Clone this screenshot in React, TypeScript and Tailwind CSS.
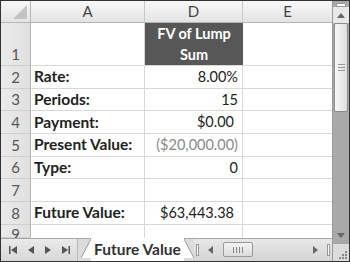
const rows = [
  { n: "2", label: "Rate:", value: "8.00%" },
  { n: "3", label: "Periods:", value: "15" },
  { n: "4", label: "Payment:", value: "$0.00", pad: true },
  { n: "5", label: "Present Value:", value: "($20,000.00)", muted: true },
  { n: "6", label: "Type:", value: "0" },
  { n: "7", label: "", value: "" },
  { n: "8", label: "Future Value:", value: "$63,443.38", pad: true },
];

function RowNum({ n, className = "" }: { n: string; className?: string }) {
  return (
    <div
      className={`w-[30px] shrink-0 flex justify-center bg-gradient-to-r from-[#ebebeb] to-[#e0e0e0] border-r border-[#b4b4b4] border-b border-b-[#cfcfcf] text-[#555] text-[15px] ${className}`}
    >
      {n}
    </div>
  );
}

export default function App() {
  return (
    <div className="w-[350px] h-[262px] overflow-hidden bg-white border border-[#333] flex font-['Lato',sans-serif] text-[#222]">
      {/* ---------- GRID ---------- */}
      <div className="w-[331px] flex flex-col">
        {/* column headers */}
        <div className="h-[22px] flex bg-gradient-to-b from-[#f8f8f8] to-[#e4e4e4] border-b border-[#b4b4b4] text-[15px] text-[#444]">
          <div className="w-[30px] border-r border-[#b4b4b4] flex items-end justify-end p-[3px]">
            <svg width="14" height="14" viewBox="0 0 14 14">
              <polygon points="14,0 14,14 0,14" fill="#c4c4c4" />
            </svg>
          </div>
          <div className="w-[114px] border-r border-[#c8c8c8] flex items-center justify-center">A</div>
          <div className="w-[98px] border-r border-[#c8c8c8] flex items-center justify-center">D</div>
          <div className="w-[89px] flex items-center justify-center">E</div>
        </div>

        {/* row 1 */}
        <div className="h-[46px] flex">
          <RowNum n="1" className="items-end" />
          <div className="w-[114px] border-r border-b border-[#d8d8d8]" />
          <div className="w-[98px] bg-[#575757] text-white font-bold text-[14.5px] leading-[21px] flex flex-col items-center justify-center border-b border-[#d8d8d8]">
            <span>FV of Lump</span>
            <span>Sum</span>
          </div>
          <div className="w-[89px] border-b border-[#d8d8d8]" />
        </div>

        {rows.map((r) => (
          <div key={r.n} className="h-[22.7px] flex">
            <RowNum n={r.n} className="items-center" />
            <div className="w-[114px] border-r border-b border-[#d8d8d8] pl-[3px] flex items-center font-bold text-[15.5px]">
              {r.label}
            </div>
            <div
              className={`w-[98px] border-r border-b border-[#d8d8d8] flex items-center justify-end text-[14.5px] ${
                r.pad ? "pr-[8px]" : "pr-[4px]"
              } ${r.muted ? "text-[#8a8a8a]" : ""}`}
            >
              {r.value}
            </div>
            <div className="w-[89px] border-b border-[#d8d8d8]" />
          </div>
        ))}

        {/* row 9 (cut off) */}
        <div className="h-[17px] flex overflow-hidden">
          <RowNum n="9" className="items-start leading-[19px]" />
          <div className="w-[114px] border-r border-[#d8d8d8]" />
          <div className="w-[98px] border-r border-[#d8d8d8]" />
          <div className="w-[89px]" />
        </div>

        {/* ---------- SHEET TABS ---------- */}
        <div className="flex-1 flex items-stretch bg-[#dcdcdc] border-t border-[#a8a8a8]">
          <div className="w-[76px] flex items-center justify-around px-[2px] bg-gradient-to-b from-[#eaeaea] to-[#d8d8d8]">
            <svg width="8" height="8" viewBox="0 0 8 8"><rect x="0" y="0" width="1.5" height="8" fill="#555" /><polygon points="8,0 8,8 2,4" fill="#555" /></svg>
            <svg width="6" height="8" viewBox="0 0 6 8"><polygon points="6,0 6,8 0,4" fill="#555" /></svg>
            <svg width="6" height="8" viewBox="0 0 6 8"><polygon points="0,0 0,8 6,4" fill="#555" /></svg>
            <svg width="8" height="8" viewBox="0 0 8 8"><polygon points="0,0 0,8 6,4" fill="#555" /><rect x="6.5" y="0" width="1.5" height="8" fill="#555" /></svg>
          </div>
          <div className="w-[4px] border-l border-[#b8b8b8]" />
          <svg width="10" height="19" viewBox="0 0 10 19" className="shrink-0">
            <polygon points="0,19 10,0 10,19" fill="#fff" />
            <line x1="0" y1="19" x2="10" y2="0" stroke="#999" />
          </svg>
          <div className="bg-white px-[3px] flex items-center font-bold text-[15.5px] text-[#333] -mt-[1px]">
            Future Value
          </div>
          <svg width="10" height="19" viewBox="0 0 10 19" className="shrink-0">
            <polygon points="0,0 10,19 0,19" fill="#fff" />
            <line x1="0" y1="0" x2="10" y2="19" stroke="#999" />
          </svg>
          {/* horizontal scroll */}
          <div className="flex-1 flex items-center gap-[4px] pl-[2px] bg-gradient-to-b from-[#e8e8e8] to-[#d4d4d4]">
            <div className="w-[3px] h-[12px] border border-[#999] bg-white" />
            <div className="w-[16px] flex justify-center">
              <svg width="5" height="8" viewBox="0 0 5 8"><polygon points="5,0 5,8 0,4" fill="#666" /></svg>
            </div>
            <div className="w-[30px] h-[15px] border border-[#9a9a9a] rounded-[2px] bg-gradient-to-b from-[#f4f4f4] to-[#dcdcdc] flex items-center justify-center gap-[2px]">
              <span className="w-[1px] h-[6px] bg-[#888]" />
              <span className="w-[1px] h-[6px] bg-[#888]" />
              <span className="w-[1px] h-[6px] bg-[#888]" />
              <span className="w-[1px] h-[6px] bg-[#888]" />
            </div>
            <div className="flex-1" />
            <div className="w-[16px] flex justify-center">
              <svg width="5" height="8" viewBox="0 0 5 8"><polygon points="0,0 0,8 5,4" fill="#666" /></svg>
            </div>
            <div className="w-[3px] h-[12px] border border-[#999] bg-white mr-[2px]" />
          </div>
        </div>
      </div>

      {/* ---------- VERTICAL SCROLLBAR ---------- */}
      <div className="flex-1 flex flex-col bg-[#a9a9a9] border-l border-[#9a9a9a]">
        <div className="h-[4px] mx-[3px] mt-[2px] border border-[#999] bg-white" />
        <div className="h-[16px] flex items-center justify-center bg-[#e8e8e8]">
          <svg width="8" height="5" viewBox="0 0 8 5"><polygon points="0,5 8,5 4,0" fill="#666" /></svg>
        </div>
        <div className="h-[89px] mx-[1px] border border-[#8c8c8c] rounded-[2px] bg-gradient-to-r from-[#fafafa] to-[#dedede] flex flex-col items-center justify-center gap-[2px]">
          <span className="w-[7px] h-[1px] bg-[#999]" />
          <span className="w-[7px] h-[1px] bg-[#999]" />
          <span className="w-[7px] h-[1px] bg-[#999]" />
        </div>
        <div className="flex-1" />
        <div className="h-[16px] flex items-center justify-center">
          <svg width="8" height="5" viewBox="0 0 8 5"><polygon points="0,0 8,0 4,5" fill="#666" /></svg>
        </div>
        <div className="h-[18px] bg-[#dcdcdc] border-t border-[#a8a8a8] flex items-end justify-end p-[2px]">
          <svg width="9" height="9" viewBox="0 0 9 9" fill="#888">
            <rect x="7" y="1" width="2" height="2" />
            <rect x="4" y="4" width="2" height="2" />
            <rect x="7" y="4" width="2" height="2" />
            <rect x="1" y="7" width="2" height="2" />
            <rect x="4" y="7" width="2" height="2" />
            <rect x="7" y="7" width="2" height="2" />
          </svg>
        </div>
      </div>
    </div>
  );
}
